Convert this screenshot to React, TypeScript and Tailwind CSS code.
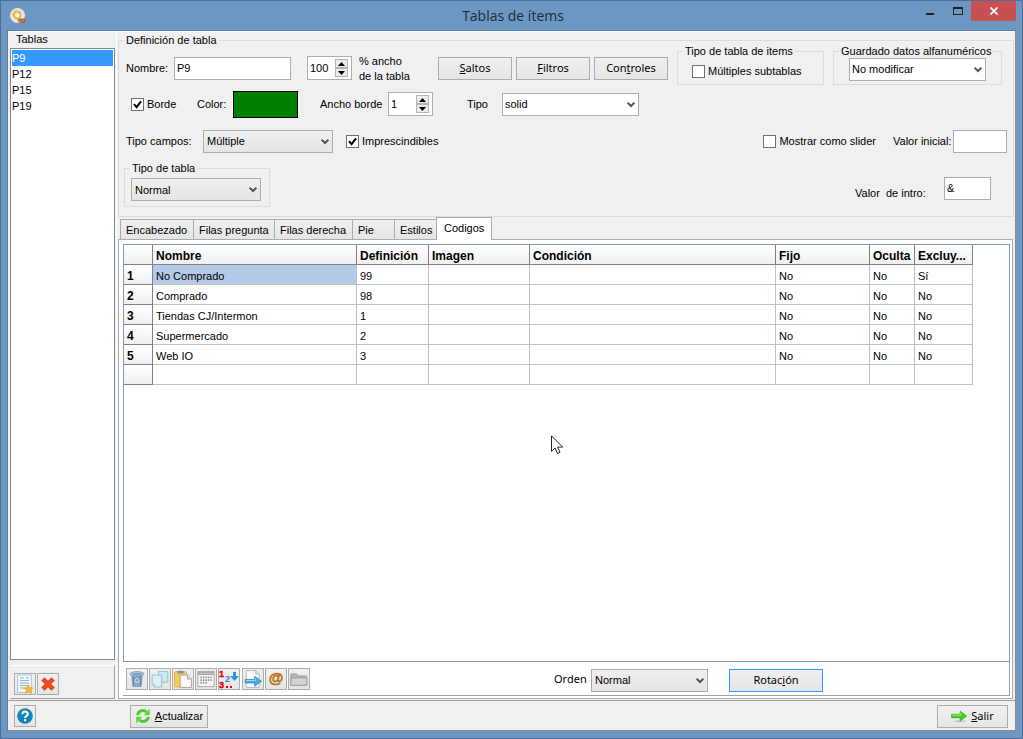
import React, { useState } from "react";

const UI = "font-['Liberation_Sans',Arial,sans-serif]";
const TAHOMA = "font-['Noto_Sans',Tahoma,sans-serif]";

function Group({ title, className = "", children }: { title: string; className?: string; children: React.ReactNode }) {
  return (
    <fieldset className={"min-w-0 border border-[#dcdcdc] " + className}>
      <legend className="ml-[5px] h-3 whitespace-nowrap px-0.5 leading-3">{title}</legend>
      {children}
    </fieldset>
  );
}

function Select({
  id,
  label,
  options,
  flat = false,
  className = "",
}: {
  id: string;
  label?: string;
  options: string[];
  flat?: boolean;
  className?: string;
}) {
  return (
    <div className={"relative h-[23px] shrink-0 " + className}>
      <select
        id={id}
        aria-label={label}
        className={
          "block h-full w-full appearance-none border border-[#acacac] pr-5 outline-none " +
          (flat ? "bg-white pb-px pl-0.5" : "bg-linear-to-b from-[#f0f0f0] to-[#e5e5e5] pl-[3px]")
        }
      >
        {options.map((o) => (
          <option key={o}>{o}</option>
        ))}
      </select>
      <svg className="pointer-events-none absolute right-1 top-2 h-2 w-2" viewBox="0 0 8 8" aria-hidden="true">
        <path d="M.6 1.6 4 5l3.4-3.4" fill="none" stroke="#555" strokeWidth="2" />
      </svg>
    </div>
  );
}

function Spinner({ id, label, value }: { id: string; label?: string; value: number }) {
  const [n, setN] = useState(value);
  const step = "flex h-[9px] w-[13px] items-center justify-center border border-[#b4b4b4] bg-[#ececec]";
  return (
    <div className="flex h-6 w-[45px] shrink-0 items-center border border-[#abadb3] bg-white pr-[3px]">
      <input
        id={id}
        aria-label={label}
        value={n}
        onChange={(e) => setN(Number(e.target.value) || 0)}
        className="h-full w-7 min-w-0 flex-1 bg-transparent pb-px pl-0.5 outline-none"
      />
      <div className="flex flex-col">
        <button type="button" aria-label="Aumentar" className={step} onClick={() => setN(n + 1)}>
          <svg className="h-1 w-[7px]" viewBox="0 0 7 4"><path d="M0 4 3.5 0 7 4z" /></svg>
        </button>
        <button type="button" aria-label="Reducir" className={step} onClick={() => setN(n - 1)}>
          <svg className="h-1 w-[7px]" viewBox="0 0 7 4"><path d="M0 0h7L3.5 4z" /></svg>
        </button>
      </div>
    </div>
  );
}

function Check({ label, checked = false, className = "" }: { label: string; checked?: boolean; className?: string }) {
  return (
    <label className={"flex shrink-0 items-center gap-[3px] whitespace-nowrap " + className}>
      <span className="relative block h-[13px] w-[13px]">
        <input
          type="checkbox"
          defaultChecked={checked}
          className="peer block h-[13px] w-[13px] appearance-none border border-[#707070] bg-white"
        />
        <svg
          className="pointer-events-none absolute inset-0 hidden h-[13px] w-[13px] peer-checked:block"
          viewBox="0 0 13 13"
          aria-hidden="true"
        >
          <path d="m3 6.2 2.6 3L10 3.4" fill="none" stroke="#000" strokeWidth="2" />
        </svg>
      </span>
      {label}
    </label>
  );
}

function PushButton({ className = "", children }: { className?: string; children: React.ReactNode }) {
  return (
    <button
      type="button"
      className={
        "flex h-[23px] shrink-0 items-center justify-center whitespace-nowrap border bg-linear-to-b from-[#f0f0f0] to-[#e5e5e5] " +
        className
      }
    >
      {children}
    </button>
  );
}

function IconButton({ label, className = "", children }: { label: string; className?: string; children: React.ReactNode }) {
  return (
    <button
      type="button"
      aria-label={label}
      className={
        "flex h-[22px] w-[22px] shrink-0 items-center justify-center border border-[#acacac] bg-linear-to-b from-[#f0f0f0] to-[#e5e5e5] " +
        className
      }
    >
      {children}
    </button>
  );
}

const svg16 = { width: 16, height: 16, viewBox: "0 0 16 16", "aria-hidden": true } as const;

const AppIcon = () => (
  <svg {...svg16}>
    <circle cx="7.5" cy="7.5" r="7.5" fill="#e6e6ee" />
    <circle cx="7" cy="6.800" r="3.400" fill="none" stroke="#f4b21f" strokeWidth="2.400" strokeDasharray="3.600 .6" />
    <circle cx="7.600" cy="7.400" r="2" fill="#fff" />
    <circle cx="10" cy="12.600" r="2.400" fill="#c9703a" />
    <circle cx="13" cy="12.800" r="2.400" fill="#b55a2c" />
    <path d="M8.600 13.400h2M12 12.600h2.200" stroke="#f0b088" strokeWidth=".8" />
  </svg>
);

const TrashIcon = () => (
  <svg width="18" height="18" viewBox="0 0 16 16" aria-hidden="true">
    <path d="M2.800 4 4 15h8l1.200-11z" fill="#86a7c6" />
    <path d="M4.800 6v8M11.200 6v8" stroke="#6688ab" strokeWidth="1.200" />
    <ellipse cx="8" cy="3.500" rx="6.200" ry="2.100" fill="#b3cadd" stroke="#7391ad" strokeWidth=".7" />
    <ellipse cx="8" cy="3.700" rx="4.200" ry="1" fill="#7e9dbb" />
    <path d="m6.500 8.600 1.500-1.400 1.500 1.400.4 2.200H6.100z" fill="none" stroke="#d2e0ec" strokeWidth=".8" />
  </svg>
);

const CopyIcon = () => (
  <svg width="18" height="18" viewBox="0 0 16 16" aria-hidden="true">
    <path d="M6.500 1.200H15v9.600H8.500l-2-2z" fill="#cfe6f1" stroke="#8dbace" strokeWidth=".8" />
    <path d="M1 4.500h8.500v10.600H3.200L1 13z" fill="#dceff7" stroke="#8dbace" strokeWidth=".8" />
    <path d="M1 13h2.200v2.100" fill="#b4d5e4" stroke="#9cc3d6" strokeWidth=".6" />
  </svg>
);

const PasteIcon = () => (
  <svg width="18" height="18" viewBox="0 0 16 16" aria-hidden="true">
    <rect x=".5" y="1.500" width="10.500" height="13.500" rx="1" fill="#f4cf5c" stroke="#d9a52c" strokeWidth=".7" />
    <rect x="3" y=".6" width="5.600" height="2.600" rx=".8" fill="#7f93aa" />
    <path d="M5.500 4.500h6.500l3.500 3.500v7.500h-10z" fill="#f9f9f9" stroke="#a0a0a0" strokeWidth=".8" />
    <path d="M12 4.500V8h3.500" fill="#ddd" stroke="#a0a0a0" strokeWidth=".8" />
  </svg>
);

const GridIcon = () => (
  <svg width="18" height="18" viewBox="0 0 16 16" aria-hidden="true">
    <rect x=".8" y="1.200" width="14.400" height="13.600" fill="#f6f6f6" stroke="#a6a6a6" strokeWidth=".8" />
    <rect x="1" y="1.400" width="14" height="3" fill="#a2a2a2" />
    <path d="M2 2.900h12" stroke="#d0d0d0" strokeWidth=".8" />
    <path d="M3 6.500h10M3 9h10M3 11.500h6" stroke="#8f8f8f" strokeWidth="1.500" strokeDasharray="1.300 .9" />
  </svg>
);

const OrderIcon = () => (
  <svg width="20" height="20" viewBox="0 0 20 20" aria-hidden="true">
    <text x="0" y="8" fontSize="9" fontWeight="700" fill="#e00000" stroke="#e00000" strokeWidth=".4">1</text>
    <text x="6" y="13" fontSize="9" fontWeight="700" fill="#2b82c6">2</text>
    <text x="0" y="19" fontSize="9" fontWeight="700" fill="#e00000" stroke="#e00000" strokeWidth=".4">3</text>
    <path d="M7 17h2v2H7zM11 17h2v2h-2z" fill="#e00000" />
    <path d="M14 3h3v4h3l-4.500 5L11 7h3z" fill="#2f94dc" />
  </svg>
);

const ExportIcon = () => (
  <svg width="18" height="18" viewBox="0 0 16 16" aria-hidden="true">
    <path d="M2 .5h8.500l3 3v12H2z" fill="#fafafa" stroke="#a6b4be" strokeWidth=".8" />
    <path d="M10.500.5v3h3" fill="#dde4e9" stroke="#a6b4be" strokeWidth=".8" />
    <path d="M1 8.500h8.500V5.600l6.100 4.400-6.100 4.400v-2.900H1z" fill="#4aa9e2" stroke="#2b86c0" strokeWidth=".7" />
    <path d="M1.800 9.400h8.300V7.600" fill="none" stroke="#a4dcf8" strokeWidth=".8" />
  </svg>
);

const AtIcon = () => (
  <svg width="20" height="20" viewBox="0 0 20 20" aria-hidden="true">
    <text x="10" y="14" textAnchor="middle" fontSize="15" fontWeight="700" fill="#c27a1a" stroke="#b06a10" strokeWidth=".5">@</text>
  </svg>
);

const FolderIcon = () => (
  <svg width="18" height="18" viewBox="0 0 16 16" aria-hidden="true">
    <path d="M.8 13.500v-10h5l1.400 1.800h7.600v8.200z" fill="#b8b8b8" stroke="#989898" strokeWidth=".8" />
    <path d="M.8 13.500V7h14.400l-.4 6.500z" fill="#d4d4d4" stroke="#989898" strokeWidth=".8" />
  </svg>
);

const NewIcon = () => (
  <svg width="18" height="20" viewBox="0 0 18 20" aria-hidden="true">
    <path d="M1.500 1h14v17.500h-14z" fill="#eef7fb" stroke="#9fc0d0" strokeWidth=".8" />
    <path d="M4 4h4M4 6.500h9M4 9h9M4 11.500h9M4 14h5M10 4h3" stroke="#93b6c8" strokeWidth="1" />
    <path d="m12.500 10.500 1.400 3 3.400.4-2.500 2.200.7 3.300-3-1.600-3 1.600.7-3.300-2.500-2.200 3.400-.4z" fill="#fbb62f" stroke="#df9a1c" strokeWidth=".5" />
  </svg>
);

const DeleteIcon = () => (
  <svg {...svg16}>
    <path d="M4.500 1.700 8 5.100l3.500-3.400 2.900 2.800L11 8l3.400 3.500-2.900 2.900L8 11l-3.500 3.400-2.900-2.900L5 8 1.600 4.500z" fill="#ea4a1c" stroke="#cf3c12" strokeWidth=".6" strokeLinejoin="round" />
  </svg>
);

const HelpIcon = () => (
  <svg {...svg16}>
    <circle cx="8" cy="8" r="7.800" fill="#0f86b8" />
    <path d="M5.300 6.200C5.300 2.600 10.800 2.700 10.800 5.900 10.800 8 8.100 8 8.100 10" fill="none" stroke="#fff" strokeWidth="2.100" />
    <rect x="7" y="11.200" width="2.200" height="2.100" fill="#fff" />
  </svg>
);

const RefreshIcon = () => (
  <svg {...svg16}>
    <path d="M2.500 7A5.600 5.600 0 0 1 11.500 3.800" fill="none" stroke="#4ccb2c" strokeWidth="3" />
    <path d="M14.800.8v6.400H8.600z" fill="#5fd83a" />
    <path d="M13.500 9A5.600 5.600 0 0 1 4.500 12.200" fill="none" stroke="#4ccb2c" strokeWidth="3" />
    <path d="M1.200 15.200V8.800h6.200z" fill="#5fd83a" />
  </svg>
);

const ExitIcon = () => (
  <svg {...svg16}>
    <ellipse cx="9" cy="13.200" rx="5.500" ry="1" fill="#c4c4c4" />
    <path d="M.6 6.300h8.600V3.200L15.600 8l-6.400 4.800V9.700H.6z" fill="#3fd21a" stroke="#2b9e10" strokeWidth=".7" />
    <path d="M1.300 7.200h8.600V5.100" fill="none" stroke="#b4f58e" strokeWidth=".9" />
  </svg>
);

const TABLES = ["P9", "P12", "P15", "P19"];
const TABS = [
  { name: "Encabezado", width: "w-[74px]" },
  { name: "Filas pregunta", width: "w-[82px]" },
  { name: "Filas derecha", width: "w-[79px]" },
  { name: "Pie", width: "w-[43px]" },
  { name: "Estilos", width: "w-[43px]" },
  { name: "Codigos", width: "w-14" },
];
const COLUMNS = ["Nombre", "Definición", "Imagen", "Condición", "Fijo", "Oculta", "Excluy..."];
const ROWS = [
  ["No Comprado", "99", "", "", "No", "No", "Sí"],
  ["Comprado", "98", "", "", "No", "No", "No"],
  ["Tiendas CJ/Intermon", "1", "", "", "No", "No", "No"],
  ["Supermercado", "2", "", "", "No", "No", "No"],
  ["Web IO", "3", "", "", "No", "No", "No"],
];

function TitleBar() {
  return (
    <header className="flex h-[29px] shrink-0 items-center">
      <div className="flex flex-1 pl-[3px]">
        <AppIcon />
      </div>
      <h1 className="font-['Open_Sans','Segoe_UI',sans-serif] text-sm text-[#1e2a36]">Tablas de ítems</h1>
      <div className="flex flex-1 justify-end self-start">
        <button type="button" aria-label="Minimizar" className="flex h-5 w-7 items-center justify-center">
          <svg width="10" height="10" viewBox="0 0 10 10"><path d="M1 7h8v2H1z" fill="#222" /></svg>
        </button>
        <button type="button" aria-label="Maximizar" className="flex h-5 w-[27px] items-center justify-center">
          <svg width="10" height="8" viewBox="0 0 10 8"><path d="M0 0h10v8H0zM1 2v5h8V2z" fill="#222" fillRule="evenodd" /></svg>
        </button>
        <button type="button" aria-label="Cerrar" className="flex h-5 w-[45px] items-center justify-center bg-[#c75050]">
          <svg width="8" height="8" viewBox="0 0 8 8"><path d="m.5.5 7 7m0-7-7 7" stroke="#fff" strokeWidth="1.700" /></svg>
        </button>
      </div>
    </header>
  );
}

function TableList() {
  const [current, setCurrent] = useState("P9");
  return (
    <aside className="flex w-[109px] shrink-0 flex-col border-r border-white pl-0.5 pr-px pt-px">
      <fieldset className="flex min-h-0 min-w-0 flex-1 flex-col">
        <legend className="ml-1 h-3 px-0.5 leading-3">Tablas</legend>
        <ul role="listbox" aria-label="Tablas" className="mt-[3px] h-full border border-[#828790] bg-white p-px">
          {TABLES.map((t) => (
            <li
              key={t}
              role="option"
              aria-selected={t === current}
              onClick={() => setCurrent(t)}
              className={"h-4 leading-4 " + (t === current ? "bg-[#3399ff] text-white" : "")}
            >
              {t}
            </li>
          ))}
        </ul>
      </fieldset>
      <div className="mb-px mt-[5px] flex h-[34px] items-center gap-px border border-b-[#a0a0a0] border-l-transparent border-r-[#a0a0a0] border-t-white pl-[3px] pt-1">
        <IconButton label="Nueva tabla"><NewIcon /></IconButton>
        <IconButton label="Eliminar tabla"><DeleteIcon /></IconButton>
      </div>
    </aside>
  );
}

function Definition() {
  const box = "h-[23px] shrink-0 border border-[#abadb3] bg-white px-0.5 pb-px outline-none";
  return (
    <Group title="Definición de tabla" className="mr-px mt-0.5">
      <div className="-mt-px flex h-[41px] items-start pl-[7px]">
        <div className="mt-[11px] flex h-6 items-center">
          <label htmlFor="nombre" className="w-12">Nombre:</label>
          <input id="nombre" defaultValue="P9" className={box + " w-[117px]"} />
          <div className="ml-4 flex items-center">
            <Spinner id="ancho" value={100} />
            <label htmlFor="ancho" className="ml-[7px] w-[79px] pt-0.5 leading-[15px]">
              % ancho
              <br />
              de la tabla
            </label>
          </div>
          <div className={"flex gap-1 " + TAHOMA}>
            <PushButton className="w-[74px] border-[#acacac]"><span><u>S</u>altos</span></PushButton>
            <PushButton className="w-[74px] border-[#acacac]"><span><u>F</u>iltros</span></PushButton>
            <PushButton className="w-[74px] border-[#acacac]"><span>Con<u>t</u>roles</span></PushButton>
          </div>
        </div>
        <div className="ml-auto mr-[11px] flex gap-[9px]">
          <Group title="Tipo de tabla de items" className="h-10 w-[147px]">
            <Check label="Múltiples subtablas" className="ml-3.5 mt-[7px]" />
          </Group>
          <Group title="Guardado datos alfanuméricos" className="h-10 w-[169px]">
            <Select id="guardado" label="Guardado datos alfanuméricos" flat options={["No modificar"]} className="ml-[15px] mt-px w-[137px]" />
          </Group>
        </div>
      </div>
      <div className="flex h-9 items-center pl-3">
        <Check label="Borde" checked className="w-[66px]" />
        <label htmlFor="color" className="w-9">Color:</label>
        <button id="color" type="button" aria-label="Color" className="h-[27px] w-[65px] border border-black bg-[#008000]" />
        <label htmlFor="ancho-borde" className="ml-[22px] w-[68px]">Ancho borde</label>
        <Spinner id="ancho-borde" value={1} />
        <label htmlFor="tipo" className="ml-[34px] w-[35px]">Tipo</label>
        <Select id="tipo" flat options={["solid"]} className="w-[137px]" />
      </div>
      <div className="flex h-[38px] items-center pl-[7px] pr-1.5">
        <label htmlFor="tipo-campos" className="w-[77px]">Tipo campos:</label>
        <Select id="tipo-campos" options={["Múltiple"]} className="w-[130px]" />
        <Check label="Imprescindibles" checked className="ml-[13px]" />
        <Check label="Mostrar como slider" className="ml-auto" />
        <label htmlFor="valor-inicial" className="ml-[17px] w-[60px] whitespace-nowrap">Valor inicial:</label>
        <input id="valor-inicial" className={box + " w-[54px]"} />
      </div>
      <div className="flex h-14 items-start justify-between pl-[5px] pr-[22px] pt-0.5">
        <Group title="Tipo de tabla" className="h-[45px] w-[146px]">
          <Select id="tipo-tabla" label="Tipo de tabla" options={["Normal"]} className="ml-1.5 mt-1 w-[130px]" />
        </Group>
        <div className="mt-[15px] flex items-center">
          <label htmlFor="valor-intro" className="w-[89px] whitespace-pre pt-2">{"Valor  de intro:"}</label>
          <input id="valor-intro" defaultValue="&" className={box + " w-[47px]"} />
        </div>
      </div>
    </Group>
  );
}

function CodesTable() {
  const head = "border-b border-r border-[#808080] bg-linear-to-b from-white to-[#f0f0f0] px-[3px] pt-0.5 text-left text-xs leading-[14px] font-bold";
  const cell = "border-b border-r border-[#c0c0c0] px-[3px] pt-0.5";
  return (
    <table className="w-[849px] table-fixed border-separate border-spacing-0">
      <colgroup>
        <col className="w-[29px]" />
        <col className="w-[204px]" />
        <col className="w-[72px]" />
        <col className="w-[101px]" />
        <col className="w-[246px]" />
        <col className="w-[94px]" />
        <col className="w-[45px]" />
        <col className="w-[58px]" />
      </colgroup>
      <thead>
        <tr className="h-5">
          <th className={head} />
          {COLUMNS.map((c) => (
            <th key={c} scope="col" className={head + " whitespace-nowrap"}>{c}</th>
          ))}
        </tr>
      </thead>
      <tbody>
        {ROWS.map((r, i) => (
          <tr key={r[0]} className="h-5">
            <th scope="row" className={head}>{i + 1}</th>
            {r.map((v, j) => (
              <td key={j} className={cell + (i === 0 && j === 0 ? " bg-[#b5c9e8]" : "")}>{v}</td>
            ))}
          </tr>
        ))}
        <tr className="h-5">
          <th className={head} />
          {COLUMNS.map((c) => (
            <td key={c} className={cell} />
          ))}
        </tr>
      </tbody>
    </table>
  );
}

function TabPanel() {
  const [active, setActive] = useState("Codigos");
  return (
    <section className="mr-0.5 flex flex-1 flex-col">
      <div role="tablist" className="flex h-[22px] shrink-0 items-end pl-0.5">
        {TABS.map((t) => (
          <button
            key={t.name}
            type="button"
            role="tab"
            aria-selected={t.name === active}
            onClick={() => setActive(t.name)}
            className={
              "-mr-px shrink-0 whitespace-nowrap border border-b-0 border-[#acacac] px-[5px] text-left " +
              t.width +
              (t.name === active
                ? " relative -mb-px h-[23px] bg-white pb-0.5 pl-[7px]"
                : " h-5 bg-linear-to-b from-[#f0f0f0] to-[#e5e5e5]")
            }
          >
            {t.name}
          </button>
        ))}
      </div>
      <div role="tabpanel" aria-label={active} className="flex flex-1 flex-col border border-[#acacac] bg-white pb-0.5 pl-1 pr-0.5 pt-1">
        <div className="relative flex-1 border border-[#7f9db9]">
          <CodesTable />
          <svg className="pointer-events-none absolute left-[427px] top-[190px]" width="13" height="20" viewBox="0 0 13 20" aria-hidden="true">
            <path d="M.5.8v15.600l3.600-3.400 2.400 5.500 2.500-1.100-2.400-5.300h5.100z" fill="#fff" stroke="#222" />
          </svg>
        </div>
        <div className="flex h-[34px] shrink-0 items-center gap-px border-b border-r border-[#a0a0a0] pl-[3px]">
          <IconButton label="Eliminar"><TrashIcon /></IconButton>
          <IconButton label="Copiar"><CopyIcon /></IconButton>
          <IconButton label="Pegar"><PasteIcon /></IconButton>
          <IconButton label="Cuadrícula"><GridIcon /></IconButton>
          <IconButton label="Ordenar"><OrderIcon /></IconButton>
          <IconButton label="Exportar" className="ml-px"><ExportIcon /></IconButton>
          <IconButton label="Correo"><AtIcon /></IconButton>
          <IconButton label="Abrir carpeta"><FolderIcon /></IconButton>
          <div className="ml-[243px] flex items-center pt-[3px]">
            <label htmlFor="orden" className={"w-[37px] pb-[3px] " + TAHOMA}>Orden</label>
            <Select id="orden" options={["Normal"]} className="w-[117px]" />
            <PushButton className={"ml-[21px] w-[94px] border-[#3399ff] " + TAHOMA}>
              <span>Rotac<u>i</u>ón</span>
            </PushButton>
          </div>
        </div>
      </div>
    </section>
  );
}

export default function App() {
  return (
    <div className={"flex min-h-screen flex-col border border-[#4d7096] bg-[#6b97c2] px-1.5 pb-[7px] text-[11px] leading-[14px] text-black " + UI}>
      <TitleBar />
      <main className="flex flex-1 flex-col border border-b-[#8a8a8a] border-l-[#5580a8] border-r-[#8a8a8a] border-t-[#5580a8] bg-[#f0f0f0]">
        <div className="flex flex-1 border-t border-white">
          <TableList />
          <div className="ml-px flex min-w-0 flex-1 flex-col">
            <Definition />
            <TabPanel />
            <div className="h-px shrink-0" />
          </div>
        </div>
        <footer className="flex h-[30px] shrink-0 items-center border-t border-[#a0a0a0] pl-1.5 pr-[7px] pt-px">
          <IconButton label="Ayuda"><HelpIcon /></IconButton>
          <PushButton className="ml-[94px] w-[78px] gap-1 border-[#acacac]">
            <RefreshIcon />
            <span><u>A</u>ctualizar</span>
          </PushButton>
          <PushButton className={"ml-auto w-[71px] gap-1 border-[#acacac] " + TAHOMA}>
            <ExitIcon />
            <span><u>S</u>alir</span>
          </PushButton>
        </footer>
      </main>
    </div>
  );
}
